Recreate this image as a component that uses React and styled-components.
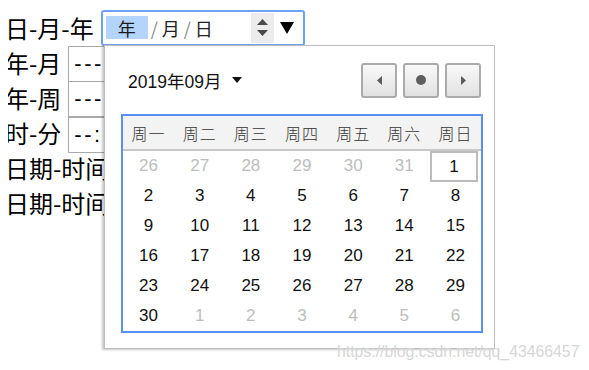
import React from "react";
import styled, { createGlobalStyle } from "styled-components";

const Global = createGlobalStyle`
  html, body { background: #fff; }
  body {
    margin: 8px;
    font-family: "Liberation Sans", "Noto Sans CJK SC", sans-serif;
    color: #000;
  }
`;

const Page = styled.div`
  position: relative;
  padding-top: 2px;
  min-height: 352px;
`;

const Form = styled.div`
  display: flex;
  flex-direction: column;
`;

const Row = styled.div`
  display: flex;
  align-items: center;
  height: 35px;
  gap: 7px;
  margin-left: -3px;
`;

const Label = styled.span`
  font-family: "Noto Sans CJK SC", sans-serif;
  font-size: 24px;
  line-height: 1;
  white-space: nowrap;
`;

const PlainInput = styled.div`
  box-sizing: border-box;
  height: 36px;
  width: 230px;
  margin-top: ${(p) => p.$shift}px;
  border: 1px solid #a9a9a9;
  display: flex;
  align-items: center;
  padding-left: 5px;
  font-size: 22px;
  letter-spacing: 2.5px;
  color: #000;
`;

const FocusInput = styled.div`
  box-sizing: border-box;
  height: 36px;
  width: 204px;
  border: 2px solid #6ea2f2;
  border-radius: 3px;
  display: flex;
  align-items: center;
  padding: 0 9px 0 3px;
  font-family: "Noto Sans CJK SC", sans-serif;
  font-size: 18px;
`;

const Seg = styled.span`
  display: inline-flex;
  align-items: center;
  justify-content: center;
  height: 23px;
  line-height: 1;
  padding: 0 ${(p) => (p.$sel ? "12px" : "1px")};
  background: ${(p) => (p.$sel ? "#b3d5fd" : "transparent")};
  color: ${(p) => (p.$sel ? "#1a1a1a" : "#222")};
`;

const Slash = styled.span`
  color: #8a8a8a;
  padding: 0 3px 0 3px;
`;

const Spacer = styled.span`
  flex: 1;
`;

const Spin = styled.span`
  display: flex;
  flex-direction: column;
  align-items: center;
  justify-content: center;
  gap: 5px;
  width: 23px;
  height: 30px;
  background: #ececec;
  margin-right: 6px;
`;

const Popup = styled.div`
  position: absolute;
  left: 96px;
  top: 37px;
  box-sizing: border-box;
  width: 391px;
  height: 304px;
  background: #fff;
  border: 1px solid #bdbdbd;
  box-shadow: -2px 1px 2px rgba(0, 0, 0, 0.22);
  padding: 16px 11px 0 16px;
  display: flex;
  flex-direction: column;
`;

const Header = styled.div`
  display: flex;
  align-items: center;
  padding: 0 2px 0 7px;
  height: 36px;
`;

const Title = styled.div`
  font-family: "Liberation Sans", "Noto Sans CJK SC", sans-serif;
  font-size: 17.5px;
  color: #111;
  display: flex;
  align-items: center;
  gap: 11px;
`;

const Buttons = styled.div`
  margin-left: auto;
  display: flex;
  gap: 6px;
`;

const NavButton = styled.div`
  box-sizing: border-box;
  width: 36px;
  height: 35px;
  border: 2px solid #ababab;
  border-radius: 3px;
  background: linear-gradient(#f9f9f9, #e1e1e1);
  display: flex;
  align-items: center;
  justify-content: center;
`;

const Table = styled.div`
  margin-top: 16px;
  box-sizing: border-box;
  width: 362px;
  border: 2px solid #5a8ff2;
  display: grid;
  grid-template-columns: repeat(7, 1fr);
`;

const HeadCell = styled.div`
  height: 33px;
  background: #f3f3f3;
  border-bottom: 2px solid #c8c8c8;
  display: flex;
  align-items: center;
  justify-content: center;
  font-family: "Noto Sans CJK SC", sans-serif;
  font-size: 16px;
  font-weight: 300;
  color: #333;
  letter-spacing: 1px;
`;

const DayCell = styled.div`
  box-sizing: border-box;
  display: flex;
  align-items: center;
  justify-content: center;
  font-size: 17px;
  color: ${(p) => (p.$muted ? "#bdbdbd" : "#111")};
  border: ${(p) => (p.$today ? "2px solid #bcbcbc" : "none")};
  margin-right: ${(p) => (p.$today ? "3px" : "0")};
  height: ${(p) => (p.$today ? "31px" : "30px")};
  margin-bottom: ${(p) => (p.$today ? "-1px" : "0")};
`;

const Watermark = styled.div`
  position: absolute;
  left: 329px;
  top: 335px;
  font-family: "Liberation Sans", sans-serif;
  font-size: 15.8px;
  color: rgba(200, 200, 200, 0.75);
  text-shadow: 0 0 1px rgba(255, 255, 255, 0.9);
  white-space: nowrap;
  pointer-events: none;
`;

const weeks = ["周一", "周二", "周三", "周四", "周五", "周六", "周日"];
const days = [];
[26, 27, 28, 29, 30, 31].forEach((d) => days.push({ d, muted: true }));
for (let i = 1; i <= 30; i++) days.push({ d: i, today: i === 1 });
[1, 2, 3, 4, 5, 6].forEach((d) => days.push({ d, muted: true }));

export default function App() {
  return (
    <>
      <Global />
      <Page>
        <Form>
          <Row>
            <Label>日-月-年</Label>
            <FocusInput>
              <Seg $sel>年</Seg>
              <Slash>/</Slash>
              <Seg>月</Seg>
              <Slash>/</Slash>
              <Seg>日</Seg>
              <Spacer />
              <Spin>
                <svg width="11" height="6" viewBox="0 0 11 6">
                  <polygon points="0,6 11,6 5.5,0" fill="#4a4a4a" />
                </svg>
                <svg width="11" height="6" viewBox="0 0 11 6">
                  <polygon points="0,0 11,0 5.5,6" fill="#4a4a4a" />
                </svg>
              </Spin>
              <svg width="14" height="12" viewBox="0 0 14 12">
                <polygon points="0,0 14,0 7,12" fill="#000" />
              </svg>
            </FocusInput>
          </Row>
          <Row>
            <Label>年-月</Label>
            <PlainInput $shift={2}>---</PlainInput>
          </Row>
          <Row>
            <Label>年-周</Label>
            <PlainInput $shift={3}>---</PlainInput>
          </Row>
          <Row>
            <Label>时-分</Label>
            <PlainInput $shift={4}>--:</PlainInput>
          </Row>
          <Row>
            <Label>日期-时间</Label>
          </Row>
          <Row>
            <Label>日期-时间</Label>
          </Row>
        </Form>

        <Popup>
          <Header>
            <Title>
              <span>2019年09月</span>
              <svg width="10" height="6" viewBox="0 0 10 6">
                <polygon points="0,0 10,0 5,6" fill="#111" />
              </svg>
            </Title>
            <Buttons>
              <NavButton>
                <svg width="5" height="9" viewBox="0 0 5 9">
                  <polygon points="5,0 5,9 0,4.5" fill="#5a5a5a" />
                </svg>
              </NavButton>
              <NavButton>
                <svg width="10" height="10" viewBox="0 0 10 10">
                  <circle cx="5" cy="5" r="5" fill="#5f5f5f" />
                </svg>
              </NavButton>
              <NavButton>
                <svg width="5" height="9" viewBox="0 0 5 9">
                  <polygon points="0,0 0,9 5,4.5" fill="#5a5a5a" />
                </svg>
              </NavButton>
            </Buttons>
          </Header>
          <Table>
            {weeks.map((w) => (
              <HeadCell key={w}>{w}</HeadCell>
            ))}
            {days.map((x, i) => (
              <DayCell key={i} $muted={x.muted} $today={x.today}>
                {x.d}
              </DayCell>
            ))}
          </Table>
        </Popup>
        <Watermark>https://blog.csdn.net/qq_43466457</Watermark>
      </Page>
    </>
  );
}
